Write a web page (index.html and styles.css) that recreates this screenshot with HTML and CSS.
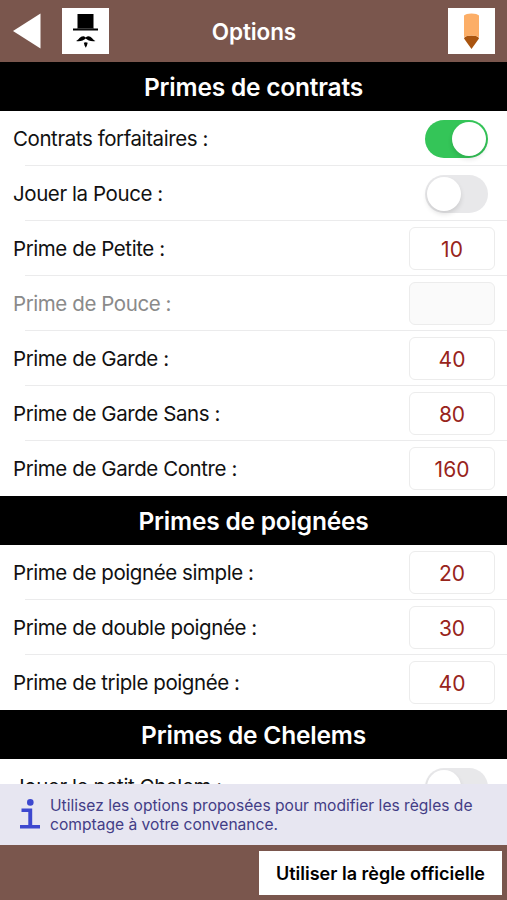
FILE: index.html
```html
<!DOCTYPE html>
<html lang="fr">
<head>
    <meta charset="UTF-8">
    <meta name="viewport" content="width=device-width, initial-scale=1.0">
    <title>Options</title>
    <link rel="stylesheet" href="styles.css">
</head>
<body>
<header class="topbar">
    <div class="side">
        <button class="back" aria-label="Retour">
            <svg width="28" height="36" viewBox="0 0 28 36"><path d="M0 18 L27.500 0.500 V35.500 Z" fill="#fff"/></svg>
        </button>
        <button class="icon-btn" aria-label="Joueur">
            <svg width="47" height="46" viewBox="0 0 47 46">
                <path d="M15.500 6 H31.500 V20.500 H36 V22.500 H11 V20.500 H15.500 Z" fill="#000"/>
                <path d="M15.500 20.700 H31.500" stroke="#777" stroke-width=".6"/>
                <path d="M14 33 C17 31.500 18 28 21.500 28.200 C22.500 28.300 23.200 28.800 23.700 29.600 C24.200 28.800 25 28.300 26 28.200 C29.500 28 30.500 31.500 33.500 33 C30 33.800 25.500 32.700 23.700 30.600 C22 32.700 17.500 33.800 14 33 Z" fill="#000"/>
                <path d="M21.800 34.800 L23.700 34.200 L25.700 34.800 L24.900 37.500 L23.800 39.800 L22.600 37.500 Z" fill="#000"/>
            </svg>
        </button>
    </div>
    <h1>Options</h1>
    <button class="icon-btn" aria-label="Modifier">
        <svg width="47" height="46" viewBox="0 0 47 46">
            <path d="M16 30.500 Q16.500 27.500 23.500 27.500 Q30.500 27.500 31 30.500 L23.500 41 Z" fill="#a9540f"/>
            <path d="M16 7.500 Q18 5.500 23.500 5.500 Q29 5.500 31 7.500 V29 Q28 27.500 23.500 27.500 Q19 27.500 16 29 Z" fill="#fcae67"/>
        </svg>
    </button>
</header>

<main class="options">
    <h2>Primes de contrats</h2>
    <div class="row">
        <label for="forfait">Contrats forfaitaires :</label>
        <input type="checkbox" class="switch" id="forfait" checked>
    </div>
    <div class="row">
        <label for="pouce">Jouer la Pouce :</label>
        <input type="checkbox" class="switch" id="pouce">
    </div>
    <div class="row">
        <label for="petite">Prime de Petite :</label>
        <input type="text" id="petite" value="10">
    </div>
    <div class="row disabled">
        <label for="primePouce">Prime de Pouce :</label>
        <input type="text" id="primePouce" disabled>
    </div>
    <div class="row">
        <label for="garde">Prime de Garde :</label>
        <input type="text" id="garde" value="40">
    </div>
    <div class="row">
        <label for="gardeSans">Prime de Garde Sans :</label>
        <input type="text" id="gardeSans" value="80">
    </div>
    <div class="row last">
        <label for="gardeContre">Prime de Garde Contre :</label>
        <input type="text" id="gardeContre" value="160">
    </div>

    <h2>Primes de poignées</h2>
    <div class="row">
        <label for="simple">Prime de poignée simple :</label>
        <input type="text" id="simple" value="20">
    </div>
    <div class="row">
        <label for="double">Prime de double poignée :</label>
        <input type="text" id="double" value="30">
    </div>
    <div class="row last">
        <label for="triple">Prime de triple poignée :</label>
        <input type="text" id="triple" value="40">
    </div>

    <h2>Primes de Chelems</h2>
    <div class="row">
        <label for="petitChelem">Jouer le petit Chelem :</label>
        <input type="checkbox" class="switch" id="petitChelem">
    </div>
</main>

<div class="info">
    <svg width="20" height="32" viewBox="0 0 20 32" fill="#3d48cf">
        <circle cx="10.300" cy="3.400" r="3.300"/>
        <path d="M1.500 9.500 H12.200 V26 H20 V29.500 H0 V26 H8.300 V13 H1.500 Z"/>
    </svg>
    <p>Utilisez les options proposées pour modifier les règles de comptage à votre convenance.</p>
</div>

<footer class="bottombar">
    <button class="official">Utiliser la règle officielle</button>
</footer>
</body>
</html>
```

FILE: styles.css
```css
* {
    box-sizing: border-box;
}
body {
    font-family: Inter, "Liberation Sans", sans-serif;
    margin: 0;
    height: 900px;
    display: flex;
    flex-direction: column;
    overflow: hidden;
    background-color: #fff;
    color: #111;
}
button {
    border: none;
    padding: 0;
    font-family: inherit;
    cursor: pointer;
}
svg {
    display: block;
    flex: none;
}
.topbar {
    flex: none;
    height: 62px;
    display: grid;
    grid-template-columns: 1fr auto 1fr;
    align-items: center;
    padding: 0 12px 0 13px;
    background-color: #7a564d;
}
.topbar > .icon-btn {
    justify-self: end;
}
.side {
    display: flex;
    align-items: center;
    gap: 21px;
}
.back {
    background: none;
}
.icon-btn {
    background-color: #fff;
}
h1 {
    margin: 0;
    color: #fff;
    font-size: 22.5px;
    font-weight: 600;
    letter-spacing: -0.1px;
}
.options {
    flex: 1;
    min-height: 0;
    overflow: hidden;
}
h2 {
    margin: 0;
    height: 49px;
    line-height: 51px;
    background-color: #000;
    color: #fff;
    font-size: 24.5px;
    font-weight: 600;
    letter-spacing: -0.2px;
    text-align: center;
}
.row {
    height: 55px;
    display: flex;
    align-items: center;
    justify-content: space-between;
    padding: 0 12px 0 13px;
    background: linear-gradient(#ebebec, #ebebec) 25px 100% / 100% 1px no-repeat;
}
.row.last {
    background: none;
}
label {
    font-size: 20.5px;
    letter-spacing: -0.42px;
}
.disabled label {
    color: #8a8a8a;
}
input[type="text"] {
    width: 86px;
    height: 43px;
    padding: 2px 0 0;
    border: 1px solid #ececec;
    border-radius: 6px;
    background-color: #fff;
    color: #98241b;
    font-family: inherit;
    font-size: 21px;
    text-align: center;
}
input[type="text"]:disabled {
    background-color: #fafafa;
}
.switch {
    appearance: none;
    width: 63px;
    height: 38px;
    margin: 0 7px 0 0;
    padding: 2px;
    display: flex;
    border-radius: 19px;
    background-color: #e8e8ea;
}
.switch::before {
    content: "";
    width: 34px;
    height: 34px;
    border-radius: 50%;
    background-color: #fff;
    box-shadow: 0 3px 5px rgba(0, 0, 0, 0.12);
}
.switch:checked {
    justify-content: flex-end;
    background-color: #34c558;
}
.info {
    flex: none;
    height: 61px;
    display: flex;
    align-items: center;
    gap: 10px;
    padding: 0 20px;
    background-color: #e7e6f1;
    color: #433d86;
}
.info p {
    margin: 0;
    font-size: 15.6px;
    line-height: 19px;
}
.bottombar {
    flex: none;
    height: 55px;
    display: flex;
    justify-content: flex-end;
    align-items: center;
    padding-right: 5px;
    background-color: #7a564d;
}
.official {
    width: 243px;
    height: 44px;
    padding-top: 1px;
    background-color: #fff;
    color: #000;
    font-size: 18px;
    font-weight: 600;
    white-space: nowrap;
}
```
